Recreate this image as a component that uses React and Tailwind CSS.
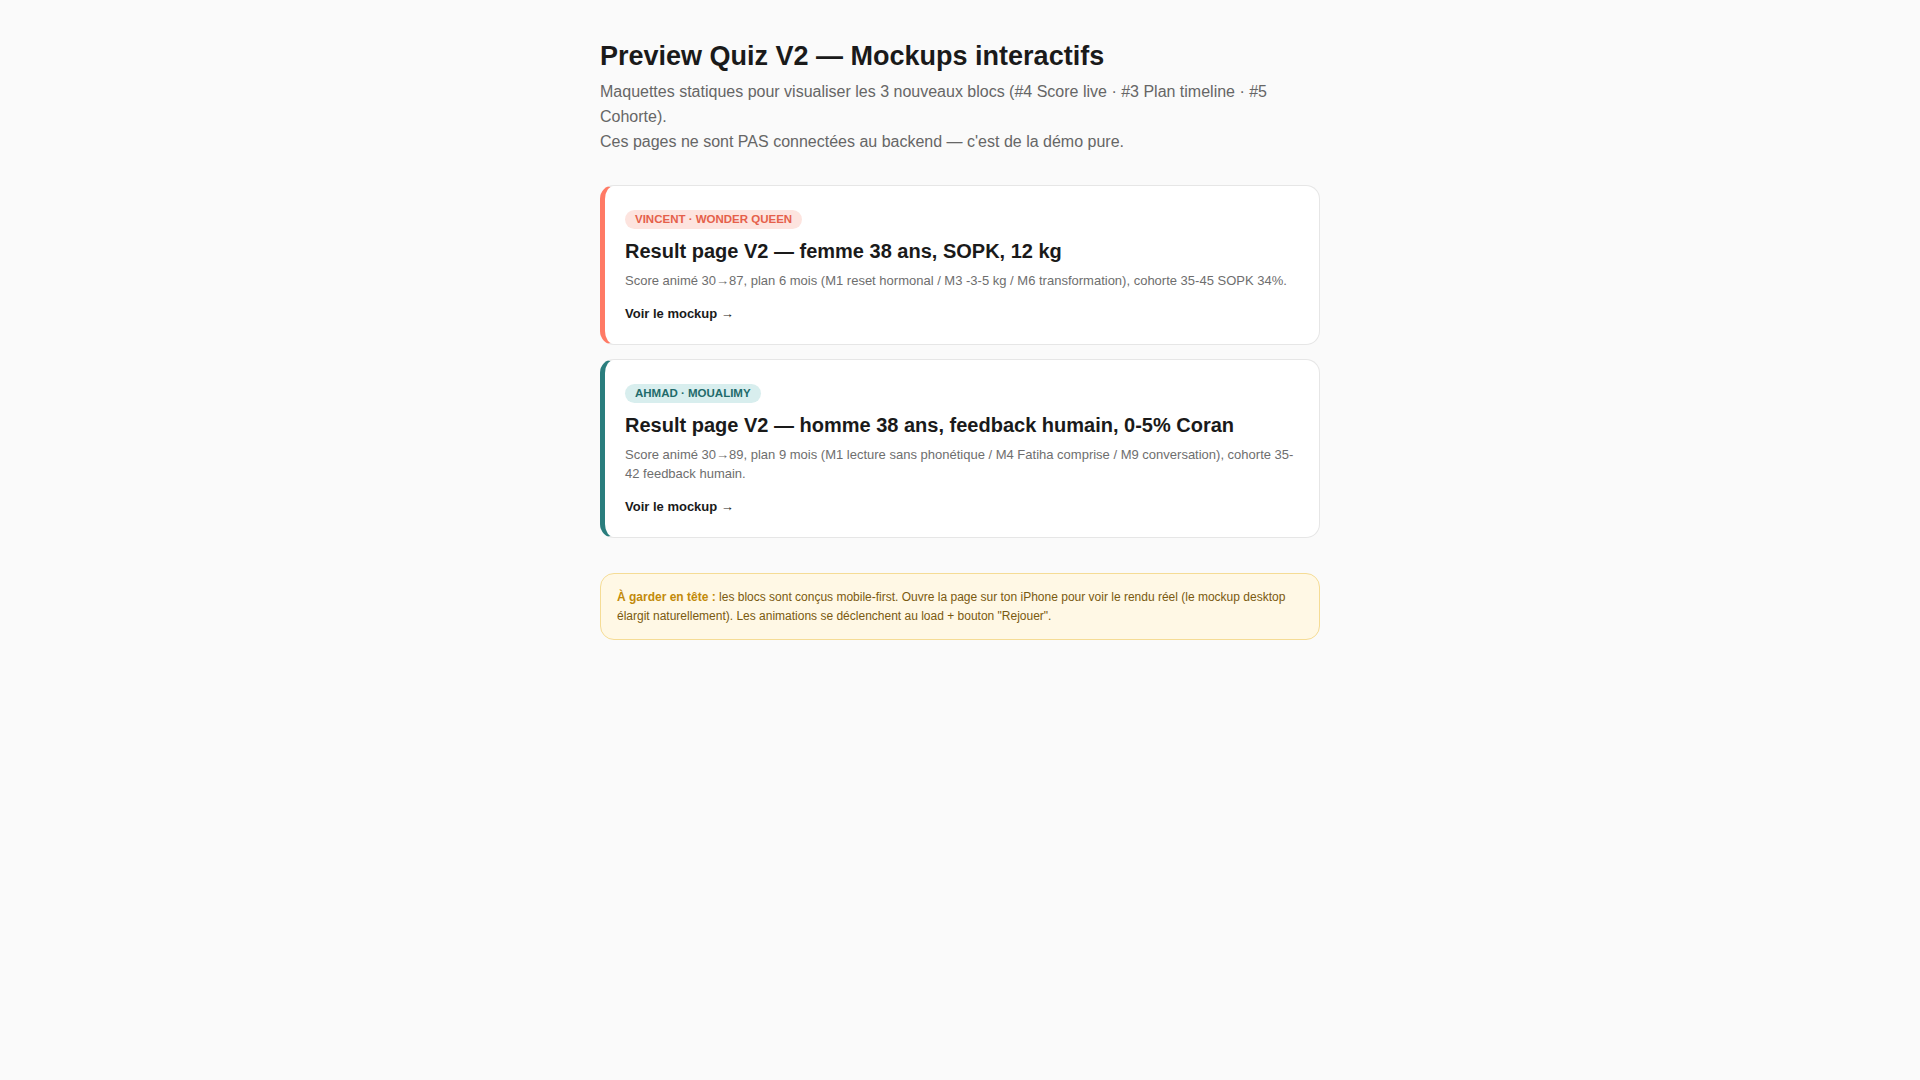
import React from 'react';

const mockups = [
    {
        id: 'vincent',
        badge: 'Vincent · Wonder Queen',
        title: 'Result page V2 — femme 38 ans, SOPK, 12 kg',
        desc: 'Score animé 30→87, plan 6 mois (M1 reset hormonal / M3 -3-5 kg / M6 transformation), cohorte 35-45 SOPK 34%.',
        stripe: 'border-l-[#ff7a65]',
        badgeClass: 'bg-[#fde4df] text-[#e5604a]',
    },
    {
        id: 'ahmad',
        badge: 'Ahmad · Moualimy',
        title: 'Result page V2 — homme 38 ans, feedback humain, 0-5% Coran',
        desc: 'Score animé 30→89, plan 9 mois (M1 lecture sans phonétique / M4 Fatiha comprise / M9 conversation), cohorte 35-42 feedback humain.',
        stripe: 'border-l-[#2a7d7d]',
        badgeClass: 'bg-[#d8eeee] text-[#1f6b6b]',
    },
];

const MockupCard = ({ m }) => (
    <a href="#" className={`block bg-white border border-[#e6e6e6] border-l-[5px] ${m.stripe} rounded-[14px] px-5 pt-[24px] pb-[21px] mb-[14px]`}>
        <span className={`block w-fit rounded-full px-[10px] text-[11.5px] leading-[18.5px] font-bold uppercase ${m.badgeClass}`}>
            {m.badge}
        </span>
        <h2 className="mt-[9px] text-[20px] leading-[26px] font-bold text-[#1a1a1a]">{m.title}</h2>
        <p className="mt-[7px] text-[13px] leading-[19px] text-[#6e6e6e]">{m.desc}</p>
        <div className="mt-[14px] text-[13px] leading-[19.5px] font-bold text-[#1a1a1a]">Voir le mockup →</div>
    </a>
);

export default function App() {
    return (
        <div className="min-h-screen bg-[#fafafa] font-['Liberation_Sans',Arial,sans-serif]">
            <div className="max-w-[720px] mx-auto pt-[40px] pb-10">
                <h1 className="text-[27px] leading-[32px] font-bold text-[#1a1a1a]">Preview Quiz V2 — Mockups interactifs</h1>
                <p className="mt-[7px] text-[16px] leading-[25px] text-[#666]">
                    Maquettes statiques pour visualiser les 3 nouveaux blocs (#4 Score live · #3 Plan timeline · #5 Cohorte).
                    <br />
                    Ces pages ne sont PAS connectées au backend — c'est de la démo pure.
                </p>

                <div className="mt-[31px]">
                    {mockups.map(m => <MockupCard key={m.id} m={m} />)}
                </div>

                <div className="mt-[35px] bg-[#fff8e5] border border-[#f5dc95] rounded-[14px] px-4 pt-[14px] pb-[13px] text-[12px] leading-[19px] text-[#7a5a10]">
                    <strong className="font-bold text-[#c28a0a]">À garder en tête :</strong> les blocs sont conçus mobile-first. Ouvre la page sur ton iPhone pour voir le rendu réel (le mockup desktop élargit naturellement). Les animations se déclenchent au load + bouton "Rejouer".
                </div>
            </div>
        </div>
    );
}
